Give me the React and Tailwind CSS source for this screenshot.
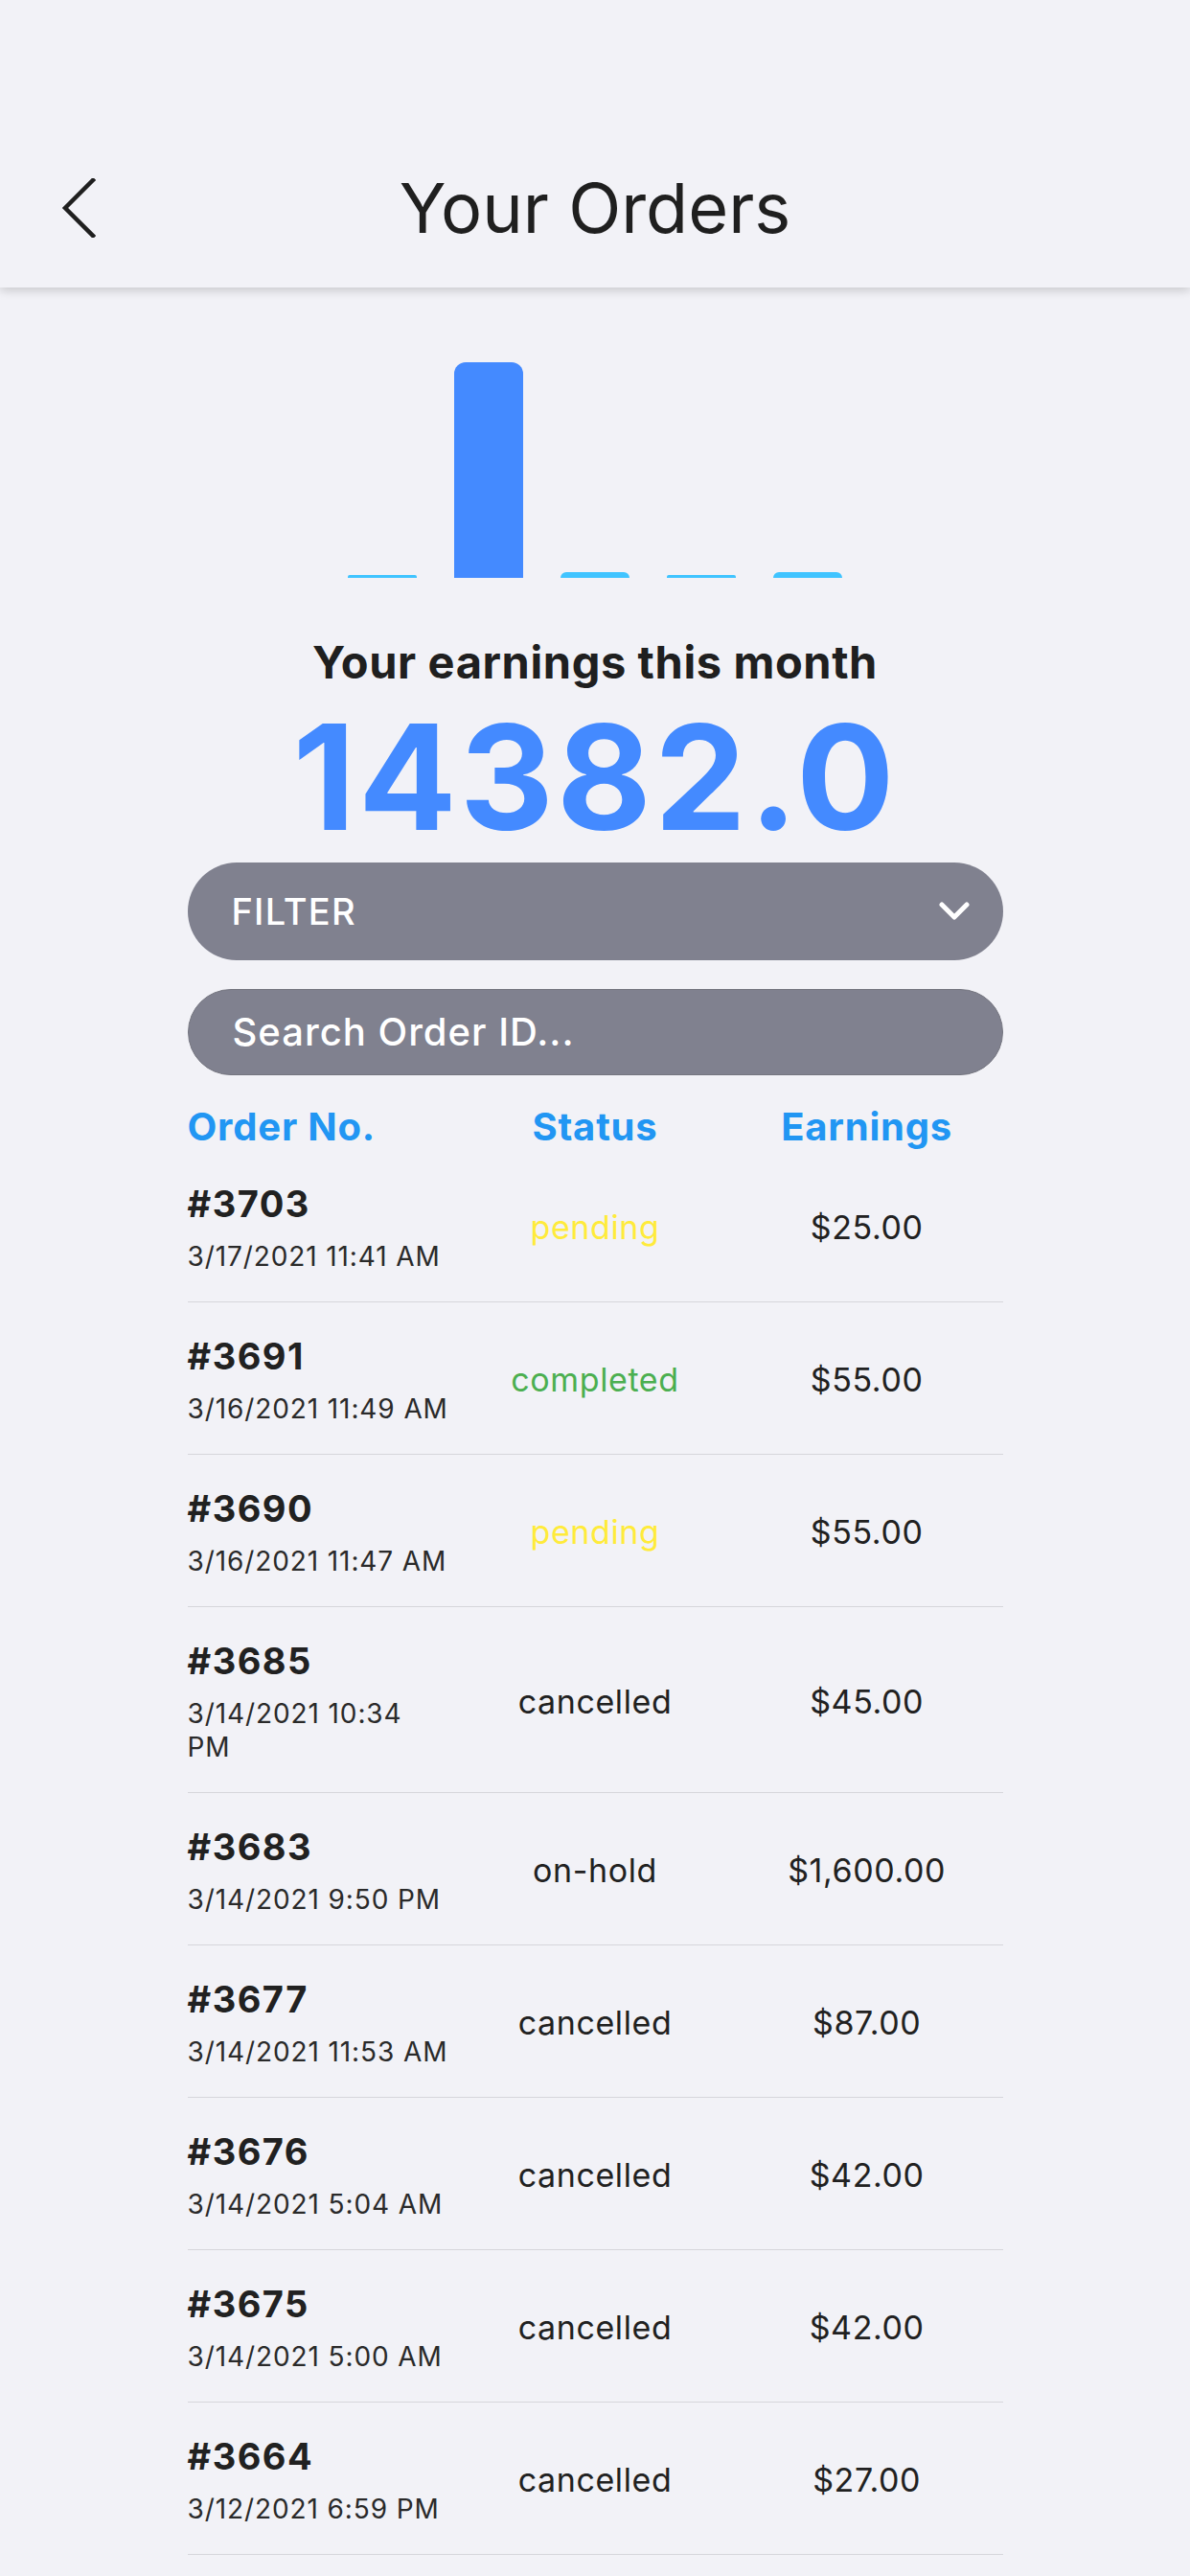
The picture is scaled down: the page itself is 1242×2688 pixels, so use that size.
const orders = [
  { id: '#3703', date: '3/17/2021 11:41 AM', status: 'pending', total: '$25.00' },
  { id: '#3691', date: '3/16/2021 11:49 AM', status: 'completed', total: '$55.00' },
  { id: '#3690', date: '3/16/2021 11:47 AM', status: 'pending', total: '$55.00' },
  { id: '#3685', date: '3/14/2021 10:34\nPM', status: 'cancelled', total: '$45.00' },
  { id: '#3683', date: '3/14/2021 9:50 PM', status: 'on-hold', total: '$1,600.00' },
  { id: '#3677', date: '3/14/2021 11:53 AM', status: 'cancelled', total: '$87.00' },
  { id: '#3676', date: '3/14/2021 5:04 AM', status: 'cancelled', total: '$42.00' },
  { id: '#3675', date: '3/14/2021 5:00 AM', status: 'cancelled', total: '$42.00' },
  { id: '#3664', date: '3/12/2021 6:59 PM', status: 'cancelled', total: '$27.00' },
]

const statusColor = {
  pending: 'text-[#ffeb3b]',
  completed: 'text-[#4caf50]',
  cancelled: 'text-[#212121]',
  'on-hold': 'text-[#212121]',
}

function Chart() {
  return (
    <div className="mt-[78px] h-[225px] flex items-end justify-center gap-[39px]">
      <div className="w-[72px] h-[3px] rounded-t-[2px] bg-[#40c4ff]" />
      <div className="w-[72px] h-[225px] rounded-t-[12px] bg-[#448aff]" />
      <div className="w-[72px] h-[6px] rounded-t-[6px] bg-[#40c4ff]" />
      <div className="w-[72px] h-[3px] rounded-t-[2px] bg-[#40c4ff]" />
      <div className="w-[72px] h-[6px] rounded-t-[6px] bg-[#40c4ff]" />
    </div>
  )
}

function OrderRow({ order }) {
  return (
    <div className="grid grid-cols-3 items-center border-b border-[#d6d6db] pt-[33px] pb-[29px]">
      <div>
        <div className="text-[38px] leading-[46px] font-bold tracking-[1.5px] text-[#212121]">{order.id}</div>
        <div className="mt-[15px] text-[28px] leading-[35px] tracking-[0.9px] text-[#2a2a2a] whitespace-pre-line">{order.date}</div>
      </div>
      <div className={`text-center text-[34px] leading-[42px] tracking-[0.6px] ${statusColor[order.status]}`}>{order.status}</div>
      <div className="text-center text-[34px] leading-[42px] tracking-[0.6px] text-[#212121]">{order.total}</div>
    </div>
  )
}

export default function App() {
  return (
    <div className="min-h-[2688px] bg-[#f2f2f7] font-['Inter','Liberation_Sans',sans-serif] text-[#212121]">
      {/* App bar */}
      <header className="relative z-10 h-[300px] pt-[174px] bg-[#f2f2f7] shadow-[0_3px_10px_rgba(0,0,0,0.18)]">
        <div className="flex items-center">
          <div className="w-[160px] pl-[64px]">
            <svg width="36" height="62" viewBox="0 0 36 62" fill="none">
              <polyline points="33,2 4,31 33,60" stroke="#1f1f1f" strokeWidth="4.5" strokeLinecap="square" />
            </svg>
          </div>
          <h1 className="flex-1 text-center text-[72px] leading-[86px] font-normal text-[#1f1f1f]">Your Orders</h1>
          <div className="w-[160px]" />
        </div>
      </header>

      <Chart />

      <div className="w-[851px] mx-auto flex flex-col items-center">
        <p className="mt-[60px] text-[47px] leading-[56px] font-bold tracking-[0.6px] text-[#1f1f1f]">Your earnings this month</p>
        <p className="mt-[17px] text-[152px] leading-[150px] font-bold tracking-[3px] text-[#448aff]">14382.0</p>

        {/* Filter */}
        <button className="mt-[14px] w-full h-[102px] rounded-full bg-[#80818f] flex items-center justify-between pl-[46px] pr-[35px]">
          <span className="text-[38px] font-medium tracking-[1.2px] text-white">FILTER</span>
          <svg width="32" height="20" viewBox="0 0 32 20" fill="none">
            <polyline points="3,3 16,16 29,3" stroke="white" strokeWidth="5" strokeLinecap="round" strokeLinejoin="round" />
          </svg>
        </button>

        {/* Search */}
        <div className="mt-[30px] w-full h-[90px] rounded-full bg-[#80818f] border border-[#74757f] flex items-center pl-[46px]">
          <span className="text-[40px] font-medium tracking-[1px] text-white">Search Order ID...</span>
        </div>

        {/* Table */}
        <div className="w-full">
          <div className="mt-[30px] grid grid-cols-3 text-[40px] leading-[48px] font-bold tracking-[0.8px] text-[#2196f3]">
            <span>Order No.</span>
            <span className="text-center">Status</span>
            <span className="text-center">Earnings</span>
          </div>
          {orders.map((o) => (
            <OrderRow key={o.id} order={o} />
          ))}
        </div>
      </div>
    </div>
  )
}
